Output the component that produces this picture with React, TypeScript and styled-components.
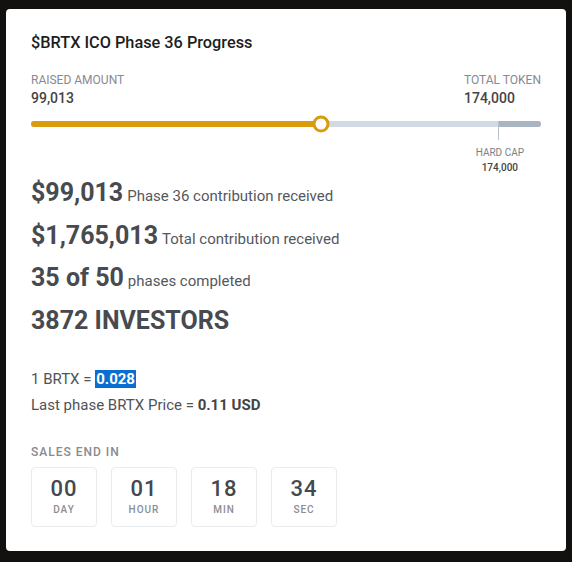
import styled, { createGlobalStyle } from "styled-components";

const GlobalStyle = createGlobalStyle`
  html, body {
    margin: 0;
    padding: 0;
    background: #131010;
  }
  body {
    font-family: Roboto, "Liberation Sans", sans-serif;
    color: #444;
  }
`;

const raised = 99013;
const total = 174000;
const hardCapAt = 91.6;

const stats = [
  { big: "$99,013", small: "Phase 36 contribution received" },
  { big: "$1,765,013", small: "Total contribution received" },
  { big: "35 of 50", small: "phases completed" },
  { big: "3872 INVESTORS", small: "" },
];

const countdown = [
  { value: "00", unit: "DAY" },
  { value: "01", unit: "HOUR" },
  { value: "18", unit: "MIN" },
  { value: "34", unit: "SEC" },
];

function App() {
  const pct = (raised / total) * 100;

  return (
    <Page>
      <GlobalStyle />
      <Card>
        <Title>$BRTX ICO Phase 36 Progress</Title>

        <Amounts>
          <Amount>
            <Label>Raised Amount</Label>
            <Value>99,013</Value>
          </Amount>
          <Amount>
            <Label>Total Token</Label>
            <Value>174,000</Value>
          </Amount>
        </Amounts>

        <Track>
          <Fill style={{ width: `${pct}%` }} />
          <CapZone style={{ left: `${hardCapAt}%` }} />
          <Knob style={{ left: `${pct}%` }} />
          <CapTick style={{ left: `${hardCapAt}%` }} />
        </Track>
        <CapRow>
          <CapLabel>
            <span>HARD CAP</span>
            <strong>174,000</strong>
          </CapLabel>
        </CapRow>

        <Stats>
          {stats.map(s => (
            <StatRow key={s.big}>
              <Big>{s.big}</Big>
              {s.small && <Small>{s.small}</Small>}
            </StatRow>
          ))}
        </Stats>

        <Prices>
          <PriceLine>
            1 BRTX = <Selected>0.028</Selected>
          </PriceLine>
          <PriceLine>
            Last phase BRTX Price = <b>0.11 USD</b>
          </PriceLine>
        </Prices>

        <SalesTitle>Sales End In</SalesTitle>
        <Boxes>
          {countdown.map(c => (
            <Box key={c.unit}>
              <BoxValue>{c.value}</BoxValue>
              <BoxUnit>{c.unit}</BoxUnit>
            </Box>
          ))}
        </Boxes>
      </Card>
    </Page>
  );
}

const Page = styled.main`
  min-height: 562px;
  box-sizing: border-box;
  padding: 9px 6px 11px 6px;
`;

const Card = styled.section`
  background: #fff;
  border-radius: 4px;
  padding: 25px;
  height: 542px;
  box-sizing: border-box;
  display: flex;
  flex-direction: column;

  & > * {
    flex-shrink: 0;
  }
`;

const Title = styled.h1`
  margin: 0;
  font-size: 16.3px;
  font-weight: 500;
  color: #1d1d1d;
  line-height: 18px;
`;

const Amounts = styled.div`
  display: flex;
  justify-content: space-between;
  margin-top: 21px;
`;

const Amount = styled.div`
  display: flex;
  flex-direction: column;
  align-items: flex-start;
  gap: 4px;
`;

const Label = styled.span`
  font-size: 12px;
  line-height: 14px;
  text-transform: uppercase;
  color: #858a90;
`;

const Value = styled.span`
  font-size: 14px;
  line-height: 15px;
  font-weight: 500;
  color: #444;
`;

const Track = styled.div`
  position: relative;
  height: 6px;
  margin-top: 15px;
  border-radius: 3px;
  background: #d3dae3;
`;

const Fill = styled.div`
  height: 100%;
  border-radius: 3px 0 0 3px;
  background: #d89c0e;
`;

const CapZone = styled.div`
  position: absolute;
  top: 0;
  right: 0;
  bottom: 0;
  border-radius: 0 3px 3px 0;
  background: #a9b6c2;
`;

const Knob = styled.div`
  position: absolute;
  top: 50%;
  width: 17px;
  height: 17px;
  box-sizing: border-box;
  border: 3px solid #d89c0e;
  border-radius: 50%;
  background: #fff;
  transform: translate(-50%, -50%);
`;

const CapTick = styled.div`
  position: absolute;
  top: 0;
  width: 1px;
  height: 19px;
  background: #b8c0c9;
`;

const CapRow = styled.div`
  display: flex;
  justify-content: flex-end;
  padding-right: 17px;
  margin-top: 20px;
`;

const CapLabel = styled.div`
  display: flex;
  flex-direction: column;
  align-items: center;
  gap: 3px;
  font-size: 10px;
  line-height: 12px;

  span {
    color: #7a7f86;
  }
  strong {
    font-weight: 500;
    color: #444;
  }
`;

const Stats = styled.div`
  display: flex;
  flex-direction: column;
  gap: 7.6px;
  margin-top: 3px;
`;

const StatRow = styled.div`
  display: flex;
  align-items: baseline;
  gap: 4px;
  line-height: 31px;
`;

const Big = styled.span`
  font-size: 25px;
  font-weight: 700;
  color: #474a4f;
`;

const Small = styled.span`
  font-size: 15px;
  color: #54585d;
`;

const Prices = styled.div`
  display: flex;
  flex-direction: column;
  gap: 8px;
  margin-top: 34px;
`;

const PriceLine = styled.div`
  font-size: 15px;
  line-height: 18px;
  color: #4f5358;

  b {
    font-weight: 700;
    color: #444;
  }
`;

const Selected = styled.b`
  background: #0b6fd2;
  color: #fff !important;
  padding: 0 1px;
`;

const SalesTitle = styled.div`
  margin-top: 31px;
  font-size: 12px;
  line-height: 14px;
  font-weight: 500;
  letter-spacing: 1px;
  text-transform: uppercase;
  color: #878b90;
`;

const Boxes = styled.div`
  display: flex;
  gap: 14px;
  margin-top: 8px;
`;

const Box = styled.div`
  width: 66px;
  height: 60px;
  box-sizing: border-box;
  border: 1px solid #e9ebee;
  border-radius: 4px;
  display: flex;
  flex-direction: column;
  align-items: center;
  justify-content: center;
  gap: 3px;
`;

const BoxValue = styled.span`
  font-size: 22px;
  line-height: 24px;
  font-weight: 500;
  letter-spacing: 1px;
  color: #45484d;
`;

const BoxUnit = styled.span`
  font-size: 10px;
  line-height: 12px;
  font-weight: 500;
  letter-spacing: 1px;
  color: #8a8e93;
`;

export default App;
